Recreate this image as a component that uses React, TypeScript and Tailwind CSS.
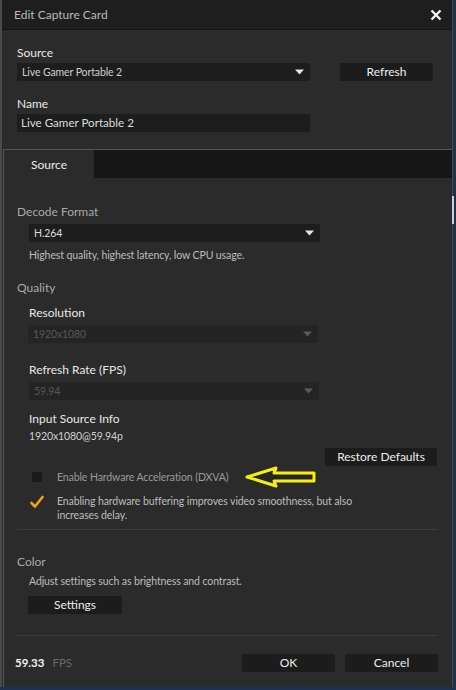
import React from "react";

const FONT = { fontFamily: 'Lato, "Noto Sans", Arial, sans-serif' };

// ─── small parts ─────────────────────────────────────────────────────────────

function Caret({ dim }: { dim?: boolean }) {
  return (
    <svg width="9" height="6" viewBox="0 0 9 6" aria-hidden="true">
      <path d="M0 0.5 H9 L4.5 5.5 Z" fill={dim ? "#5a5a5a" : "#e6e6e6"} />
    </svg>
  );
}

function Select({
  value,
  className,
  disabled,
  textClass,
}: {
  value: string;
  className: string;
  disabled?: boolean;
  textClass?: string;
}) {
  return (
    <div
      className={
        "h-[18px] flex items-center justify-between pl-[5px] pr-[6px] " +
        (disabled ? "bg-[#242424] " : "bg-[#1d1d1d] ") +
        className
      }
    >
      <span
        className={
          "leading-none tracking-[-0.1px] " +
          (textClass ?? (disabled ? "text-[10.5px] text-[#585858]" : "text-[10.5px] text-[#cfcfcf]"))
        }
      >
        {value}
      </span>
      <Caret dim={disabled} />
    </div>
  );
}

function Btn({ label, className }: { label: string; className: string }) {
  return (
    <div
      className={
        "h-[18px] flex items-center justify-center bg-[#1c1c1c] text-[12px] text-[#ececec] leading-none " +
        className
      }
    >
      {label}
    </div>
  );
}

function YellowArrow() {
  return (
    <svg width="74" height="24" viewBox="0 0 74 24" aria-hidden="true">
      <path
        d="M3 12 L32 3 L30 8 L70 8 L70 16 L30 16 L32 21 Z"
        fill="#262626"
        stroke="#f5ef10"
        strokeWidth="3"
        strokeLinejoin="round"
      />
    </svg>
  );
}

const label = "h-[16px] text-[12px] leading-[16px] text-[#e8e8e8]";
const section = "h-[16px] text-[12px] leading-[16px] text-[#a9a9a9]";
const small = "h-[14px] text-[10.5px] leading-[14px] tracking-[-0.1px]";

// ─── App ─────────────────────────────────────────────────────────────────────

export default function App() {
  return (
    <div className="w-[456px] h-[690px] flex bg-[#1b3350] overflow-hidden" style={FONT}>
      <div className="w-[453px] h-[687px] flex flex-col bg-[#2b2b2b] border-l-[2px] border-r border-[#4a4a4a]">
        {/* Title bar */}
        <div className="h-[30px] shrink-0 flex items-center justify-between pl-[12px] pr-[10px] pt-[1px] bg-[#1e1e1e] border-b border-[#141414]">
          <span className="text-[12px] text-[#b9b9b9]">Edit Capture Card</span>
          <svg width="12" height="12" viewBox="0 0 12 12" aria-hidden="true">
            <path d="M1.5 1.5 L10.5 10.5 M10.5 1.5 L1.5 10.5" stroke="#f2f2f2" strokeWidth="2.4" />
          </svg>
        </div>

        {/* Source / Name */}
        <div className="pl-[15px]">
          <div className={"mt-[15px] " + label}>Source</div>
          <div className="mt-[2px] flex items-center">
            <Select value="Live Gamer Portable 2" className="w-[293px]" />
            <Btn label="Refresh" className="ml-[30px] w-[93px]" />
          </div>
          <div className={"mt-[15px] " + label}>Name</div>
          <div className="mt-[2px] w-[293px] h-[18px] flex items-center pl-[4px] bg-[#1d1d1d] text-[11.6px] text-[#dcdcdc] leading-none">
            Live Gamer Portable 2
          </div>
        </div>

        {/* Tab panel */}
        <div className="mt-[17px] ml-[1px] flex-1 flex flex-col border-t border-l border-[#555]">
          <div className="h-[28px] shrink-0 flex bg-[#161616]">
            <div className="w-[90px] flex items-center justify-center pt-[2px] bg-[#2b2b2b] text-[12px] text-[#ececec]">
              Source
            </div>
          </div>

          <div className="relative flex-1 pl-[13px] pr-[14px]">
            {/* scrollbar thumb */}
            <div className="absolute right-[-2px] top-[18px] w-[2px] h-[28px] bg-[#cfcfcf]" />

            <div className={"mt-[26px] " + section}>Decode Format</div>
            <div className="mt-[4px] ml-[12px]">
              <Select value="H.264" className="w-[291px]" textClass="text-[10.5px] text-[#dcdcdc]" />
            </div>
            <div className={"mt-[6px] ml-[12px] text-[#bdbdbd] " + small}>
              Highest quality, highest latency, low CPU usage.
            </div>

            <div className={"mt-[18px] " + section}>Quality</div>
            <div className="ml-[12px]">
              <div className={"mt-[9px] " + label}>Resolution</div>
              <div className="mt-[4px] -ml-[1px]">
                <Select value="1920x1080" disabled className="w-[290px]" />
              </div>
              <div className={"mt-[19px] " + label}>Refresh Rate (FPS)</div>
              <div className="mt-[4px]">
                <Select value="59.94" disabled className="w-[290px]" />
              </div>
              <div className={"mt-[11px] " + label}>Input Source Info</div>
              <div className={"mt-[2px] text-[#d0d0d0] " + small}>1920x1080@59.94p</div>
            </div>

            <div className="mt-[5px] flex justify-end pr-[1px]">
              <Btn label="Restore Defaults" className="w-[112px]" />
            </div>

            <div className="relative mt-[4px] h-[14px] flex items-center">
              <div className="ml-[15px] w-[10px] h-[10px] bg-[#1a1a1a]" />
              <span className={"ml-[15px] text-[#9a9a9a] " + small}>Enable Hardware Acceleration (DXVA)</span>
              <div className="absolute left-[227px] top-[-5px]">
                <YellowArrow />
              </div>
            </div>

            <div className="mt-[10px] flex items-start">
              <svg className="ml-[13px] mt-[1px] shrink-0" width="14" height="14" viewBox="0 0 14 14" aria-hidden="true">
                <path
                  d="M1.5 8 L5 11.5 L12.5 2"
                  fill="none"
                  stroke="#eba421"
                  strokeWidth="2.6"
                  strokeLinecap="round"
                  strokeLinejoin="round"
                />
              </svg>
              <span className="ml-[13px] w-[310px] text-[10.5px] leading-[14px] tracking-[-0.1px] text-[#bdbdbd]">
                Enabling hardware buffering improves video smoothness, but also increases delay.
              </span>
            </div>

            <div className="mt-[7px] h-px bg-[#3c3c3c]" />

            <div className={"mt-[24px] " + section}>Color</div>
            <div className="ml-[12px]">
              <div className={"mt-[4px] text-[#bdbdbd] " + small}>Adjust settings such as brightness and contrast.</div>
              <div className="mt-[8px] -ml-[1px]">
                <Btn label="Settings" className="w-[94px]" />
              </div>
            </div>

            <div className="mt-[21px] h-px bg-[#3c3c3c]" />

            <div className="mt-[18px] flex items-center">
              <div className="-ml-[2px] flex items-baseline gap-[8px]">
                <span className="text-[11.5px] font-bold text-[#f2f2f2]">59.33</span>
                <span className="text-[11.5px] text-[#6a6a6a]">FPS</span>
              </div>
              <div className="ml-auto flex gap-[10px]">
                <Btn label="OK" className="w-[93px]" />
                <Btn label="Cancel" className="w-[93px]" />
              </div>
            </div>
          </div>
        </div>
      </div>
    </div>
  );
}
